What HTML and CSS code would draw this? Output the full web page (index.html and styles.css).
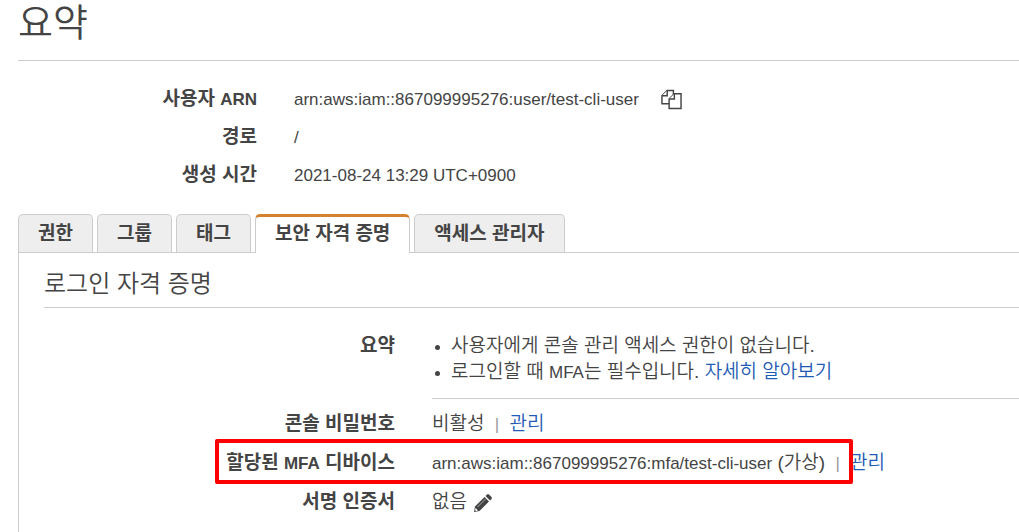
FILE: index.html
```
<!DOCTYPE html>
<html lang="ko">
<head>
    <meta charset="UTF-8">
    <meta name="viewport" content="width=device-width, initial-scale=1.0">
    <title>요약</title>
    <link rel="stylesheet" href="styles.css">
</head>
<body>
    <h1>요약</h1>

    <dl class="details user-details">
        <div class="row">
            <dt>사용자 <span class="latin">ARN</span></dt>
            <dd>
                <span class="latin">arn:aws:iam::867099995276:user/test-cli-user</span>
                <button type="button" class="icon-btn copy-btn" aria-label="복사">
                    <svg width="21" height="21" viewBox="0 0 22 21" fill="#fff" stroke="#444" stroke-width="1.5">
                        <path d="M6.5 1H13v14H1V6.500z"/>
                        <path d="M6.500 1v5.500H1" />
                        <path d="M14 4.500h7V20H8.500V10z"/>
                        <path d="M14 4.500V10H8.500"/>
                    </svg>
                </button>
            </dd>
        </div>
        <div class="row">
            <dt>경로</dt>
            <dd><span class="latin">/</span></dd>
        </div>
        <div class="row">
            <dt>생성 시간</dt>
            <dd><span class="latin">2021-08-24 13:29 UTC+0900</span></dd>
        </div>
    </dl>

    <div class="tabs" role="tablist">
        <button type="button" class="tab" role="tab">권한</button>
        <button type="button" class="tab" role="tab">그룹</button>
        <button type="button" class="tab" role="tab">태그</button>
        <button type="button" class="tab active" role="tab" aria-selected="true">보안 자격 증명</button>
        <button type="button" class="tab" role="tab">액세스 관리자</button>
    </div>

    <div class="panel" role="tabpanel">
        <h2>로그인 자격 증명</h2>

        <dl class="details login-details">
            <div class="row summary-row">
                <dt>요약</dt>
                <dd>
                    <ul>
                        <li>사용자에게 콘솔 관리 액세스 권한이 없습니다.</li>
                        <li>로그인할 때 <span class="latin">MFA</span>는 필수입니다. <a href="#">자세히 알아보기</a></li>
                    </ul>
                </dd>
            </div>
            <div class="row">
                <dt>콘솔 비밀번호</dt>
                <dd>비활성 <span class="sep">|</span> <a href="#">관리</a></dd>
            </div>
            <div class="row marked">
                <dt>할당된 <span class="latin">MFA</span> 디바이스</dt>
                <dd><span class="latin">arn:aws:iam::867099995276:mfa/test-cli-user</span> (가상) <span class="sep">|</span> <a href="#">관리</a></dd>
            </div>
            <div class="row">
                <dt>서명 인증서</dt>
                <dd>
                    없음
                    <button type="button" class="icon-btn edit-btn" aria-label="편집">
                        <svg width="18" height="18" viewBox="0 0 18 18" fill="#444">
                            <path d="M10.500 3l4.500 4.500L5.500 17 0 18l1-5.500z"/>
                            <path d="M11.500 2l1.500-1.500q1-.8 2 0l2.500 2.500q.8 1 0 2L16 6.500z"/>
                            <path d="M3.500 13l8-8" stroke="#aaa" stroke-width="1"/>
                            <path d="M1.500 14l2.500 2.500-2 .5-1-1z" fill="#fff"/>
                        </svg>
                    </button>
                </dd>
            </div>
        </dl>
    </div>
</body>
</html>
```
FILE: styles.css
```
*, *::after {
    box-sizing: border-box;
}
body {
    display: flex;
    flex-direction: column;
    min-height: 100vh;
    margin: 0;
    padding-left: 18px;
    background: #fff;
    color: #444;
    font-family: "Liberation Sans", "Noto Sans CJK KR", sans-serif;
    font-size: 19px;
    font-weight: 350;
}
h1, h2, dl, dd, ul {
    margin: 0;
    padding: 0;
}
h1 {
    padding-bottom: 14px;
    border-bottom: 1px solid #ccc;
    font-size: 38px;
    font-weight: 350;
    line-height: 46px;
}
a {
    color: #1f5bb5;
    text-decoration: none;
}
.latin {
    font-size: 17px;
    line-height: 1;
}

/* label / value rows */
.row {
    position: relative;
    display: grid;
    column-gap: 37px;
    line-height: 38px;
}
.user-details {
    padding: 19px 0 20px;
}
.user-details .row {
    grid-template-columns: 239px 1fr;
}
.login-details .row {
    grid-template-columns: 351px 1fr;
    line-height: 39px;
}
dt {
    font-weight: bold;
    text-align: right;
}
.sep {
    margin: 0 5px;
    color: #999;
    font-size: 17px;
    line-height: 1;
}
.icon-btn {
    padding: 0;
    border: none;
    background: none;
    vertical-align: middle;
    cursor: pointer;
}
.icon-btn svg {
    display: block;
}
.copy-btn {
    margin-left: 17px;
}
.edit-btn {
    margin-left: 2px;
}

/* tabs */
.tabs {
    display: flex;
    gap: 4px;
    border-bottom: 1px solid #ccc;
}
.tab {
    height: 38px;
    padding: 0 19px 4px;
    border: 1px solid #ccc;
    border-bottom: none;
    border-radius: 5px 5px 0 0;
    background: #eee;
    color: #444;
    font-family: inherit;
    font-size: 19px;
    font-weight: bold;
    cursor: pointer;
}
.tab.active {
    height: 39px;
    margin-bottom: -1px;
    padding-bottom: 7px;
    border-top: 3px solid #d5822f;
    background: #fff;
}

/* tab content */
.panel {
    flex: 1;
    padding-left: 25px;
    border-left: 1px solid #ccc;
}
h2 {
    padding: 12px 0 4px;
    border-bottom: 1px solid #ccc;
    font-size: 24px;
    font-weight: 350;
    line-height: 38px;
}
.login-details {
    padding-top: 25px;
}
.login-details .summary-row {
    margin-bottom: 5px;
    line-height: 26px;
}
.summary-row dd {
    padding-bottom: 13px;
    border-bottom: 1px solid #ccc;
}
.summary-row ul {
    padding-left: 19px;
}
li::marker {
    font-size: 15px;
}

/* red frame around the MFA row */
.marked::after {
    content: "";
    position: absolute;
    top: -4px;
    left: 171px;
    width: 638px;
    height: 45px;
    border: 4px solid #f00;
    border-radius: 2px;
    pointer-events: none;
}
```
